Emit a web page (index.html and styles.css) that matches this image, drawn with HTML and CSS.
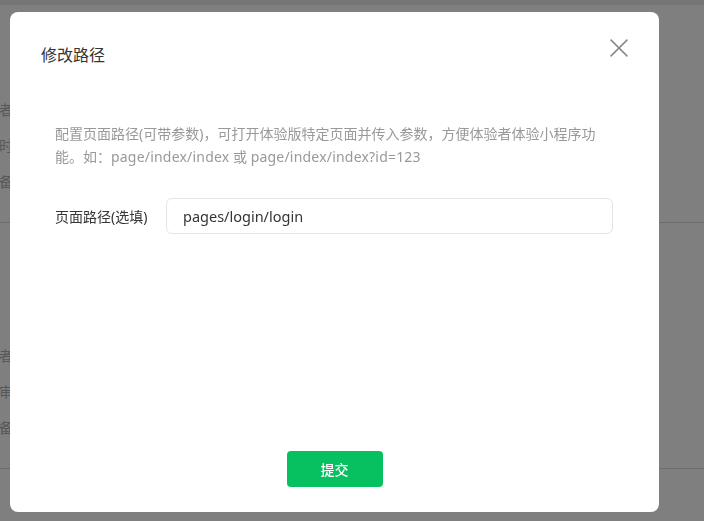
FILE: index.html
```html
<!DOCTYPE html>
<html lang="zh-CN">
<head>
<meta charset="utf-8">
<title>修改路径</title>
<link rel="stylesheet" href="styles.css">
</head>
<body>
<div class="page">
  <div class="page-top"></div>
  <div class="section">
    <div class="row"><span class="k">开发者</span></div>
    <div class="row"><span class="k">提交时</span></div>
    <div class="row"><span class="k">备</span></div>
  </div>
  <div class="section second">
    <div class="row"><span class="k">开发者</span></div>
    <div class="row"><span class="k">审</span></div>
    <div class="row"><span class="k">备</span></div>
  </div>
</div>

<div class="mask">
  <div class="dialog">
    <div class="dialog-hd">
      <h2 class="dialog-title">修改路径</h2>
      <button class="dialog-close" aria-label="关闭">
        <svg width="18" height="18" viewBox="0 0 18 18"><path d="M0.6 0.6 L17.4 17.4 M17.4 0.6 L0.6 17.4" stroke="#888" stroke-width="1.5" fill="none"/></svg>
      </button>
    </div>
    <div class="dialog-bd">
      <p class="tips">配置页面路径(可带参数)，可打开体验版特定页面并传入参数，方便体验者体验小程序功能。如：<span class="latin">page/index/index</span> 或 <span class="latin">page/index/index?id=123</span></p>
      <div class="form-row">
        <label class="form-label">页面路径(选填)</label>
        <div class="input">pages/login/login</div>
      </div>
    </div>
    <div class="dialog-ft">
      <button class="btn-primary">提交</button>
    </div>
  </div>
</div>
</body>
</html>
```
FILE: styles.css
```css
* { box-sizing: border-box; }
html, body { margin: 0; padding: 0; }
body {
  width: 704px;
  height: 521px;
  overflow: hidden;
  background: #fff;
  font-family: "Noto Sans", "Noto Sans CJK SC", sans-serif;
  font-size: 14px;
  color: #353535;
}
.page { width: 704px; height: 521px; }
.page-top { height: 5px; background: #ececec; }
.section {
  padding-top: 86px;
  padding-bottom: 23px;
  border-bottom: 1px solid #d8d8d8;
}
.section.second { padding-top: 114px; }
.row {
  height: 36px;
  width: 13px;
  display: flex;
  justify-content: flex-end;
  align-items: center;
  white-space: nowrap;
  color: #b0b0b0;
}
.mask {
  position: fixed;
  inset: 0;
  background: rgba(0, 0, 0, 0.5);
  padding: 12px 0 0 10px;
}
.dialog {
  width: 649px;
  height: 500px;
  background: #fff;
  border-radius: 8px;
  display: flex;
  flex-direction: column;
}
.dialog-hd {
  display: flex;
  justify-content: space-between;
  align-items: flex-start;
  padding: 31px 31px 0 31px;
}
.dialog-title {
  margin: 0;
  font-size: 16px;
  font-weight: normal;
  line-height: 24px;
  color: #353535;
}
.dialog-close {
  border: 0;
  background: none;
  padding: 0;
  margin-top: -4px;
  width: 18px;
  height: 18px;
  cursor: pointer;
}
.dialog-close svg { display: block; }
.dialog-bd {
  flex: 1;
  padding: 55px 46px 0 45px;
}
.tips {
  margin: 0;
  font-size: 14px;
  line-height: 23px;
  color: #999;
  text-spacing-trim: space-all;
}
.tips .latin { letter-spacing: 0.2px; }
.form-row {
  display: flex;
  align-items: center;
  margin-top: 30px;
}
.form-label {
  width: 111px;
  flex-shrink: 0;
  color: #353535;
}
.input {
  flex: 1;
  height: 36px;
  border: 1px solid #e3e3e3;
  border-radius: 6px;
  padding: 0 16px;
  display: flex;
  align-items: center;
  font-size: 14.5px;
  color: #353535;
}
.dialog-ft {
  display: flex;
  justify-content: center;
  padding-bottom: 25px;
}
.btn-primary {
  width: 96px;
  height: 36px;
  border: 0;
  border-radius: 4px;
  background: #07c160;
  color: #fff;
  font-family: "Noto Sans CJK SC", sans-serif;
  font-size: 14px;
  font-weight: 500;
}
```
